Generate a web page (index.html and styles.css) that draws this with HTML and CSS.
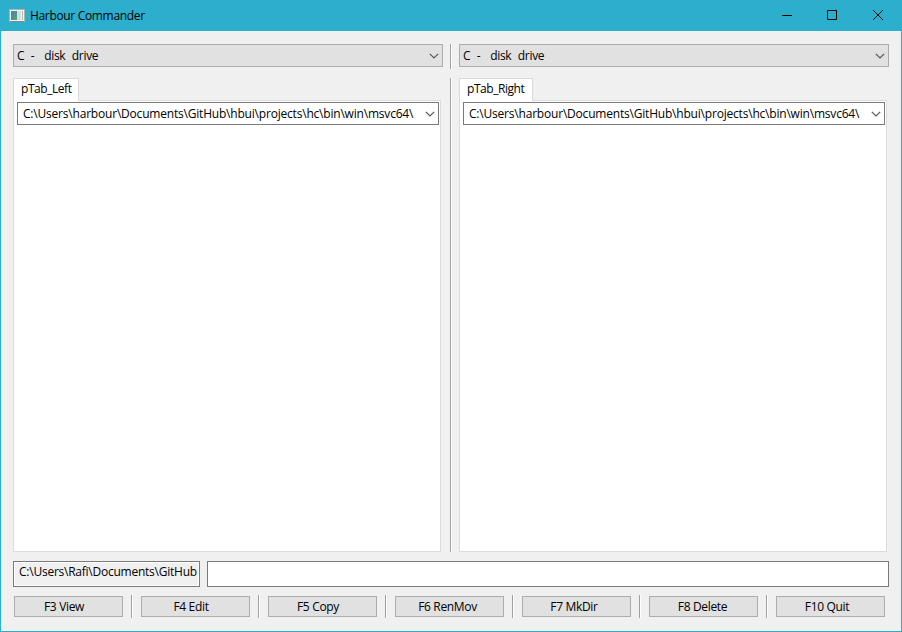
FILE: index.html
```html
<!DOCTYPE html>
<html lang="en">
<head>
<meta charset="utf-8">
<title>Harbour Commander</title>
<link rel="stylesheet" href="styles.css">
</head>
<body>
<div class="window">
  <header class="titlebar">
    <svg class="app-icon" width="16" height="14" viewBox="0 0 16 14">
      <defs><linearGradient id="g" x1="0" y1="0" x2="1" y2="1"><stop offset="0" stop-color="#4a7fa8"/><stop offset="1" stop-color="#55a878"/></linearGradient></defs>
      <rect x=".5" y=".5" width="15" height="12" fill="#f4f4f4" stroke="#b8b0aa"/>
      <rect x="1" y="12" width="14" height="1" fill="#8d8580"/>
      <rect x="2" y="2" width="6" height="9" fill="url(#g)"/>
      <rect x="8" y="2" width="4" height="9" fill="#d5dce0"/>
      <rect x="13" y="2" width="1" height="9" fill="#9fc0b8"/>
    </svg>
    <h1 class="title">Harbour Commander</h1>
    <div class="controls">
      <svg width="46" height="30" viewBox="0 0 46 30"><path d="M19 14.500h10"/></svg>
      <svg width="46" height="30" viewBox="0 0 46 30"><path d="M18.500 9.500h9v9h-9z"/></svg>
      <svg width="46" height="30" viewBox="0 0 46 30"><path d="M18 9l10 10m0-10l-10 10"/></svg>
    </div>
  </header>
  <main class="content">
    <div class="drives">
      <div class="combo drive"><span class="t-drive">C  -   disk  drive</span><svg class="chevron" width="10" height="6" viewBox="0 0 10 6"><path d="M.8 .8l4.200 4.200 4.200-4.200"/></svg></div>
      <i class="divider"></i>
      <div class="combo drive"><span class="t-drive">C  -   disk  drive</span><svg class="chevron" width="10" height="6" viewBox="0 0 10 6"><path d="M.8 .8l4.200 4.200 4.200-4.200"/></svg></div>
    </div>
    <div class="panels">
      <section class="panel">
        <div class="tab tab-left"><span class="t-tab">pTab_Left</span></div>
        <div class="pane">
          <div class="combo path"><span class="t-path">C:\Users\harbour\Documents\GitHub\hbui\projects\hc\bin\win\msvc64\</span><svg class="chevron" width="10" height="6" viewBox="0 0 10 6"><path d="M.8 .8l4.200 4.200 4.200-4.200"/></svg></div>
        </div>
      </section>
      <i class="divider"></i>
      <section class="panel">
        <div class="tab tab-right"><span class="t-tab">pTab_Right</span></div>
        <div class="pane">
          <div class="combo path"><span class="t-path">C:\Users\harbour\Documents\GitHub\hbui\projects\hc\bin\win\msvc64\</span><svg class="chevron" width="10" height="6" viewBox="0 0 10 6"><path d="M.8 .8l4.200 4.200 4.200-4.200"/></svg></div>
        </div>
      </section>
    </div>
    <div class="command">
      <div class="cwd"><span class="t-cwd">C:\Users\Rafi\Documents\GitHub</span></div>
      <input class="entry" type="text" aria-label="Command">
    </div>
    <footer class="keys">
      <button class="key">F3 View</button><i class="divider"></i>
      <button class="key">F4 Edit</button><i class="divider"></i>
      <button class="key">F5 Copy</button><i class="divider"></i>
      <button class="key renmov">F6 RenMov</button><i class="divider"></i>
      <button class="key mkdir">F7 MkDir</button><i class="divider"></i>
      <button class="key delete">F8 Delete</button><i class="divider"></i>
      <button class="key quit">F10 Quit</button>
    </footer>
  </main>
</div>
</body>
</html>
```
FILE: styles.css
```css
* { box-sizing: border-box; }
body {
  margin: 0;
  font: 12px/16px "Open Sans", "Noto Sans", sans-serif;
  color: #000;
}
.window {
  width: 902px;
  height: 632px;
  display: flex;
  flex-direction: column;
  background: #f0f0f0;
  border: 1px solid #2bafcc;
}
.titlebar {
  height: 30px;
  flex: none;
  display: flex;
  align-items: center;
  padding-left: 8px;
  background: #2bafcc;
}
.app-icon { margin-top: -1px; }
.title {
  margin: 0 0 0 5px;
  font-size: 12px;
  font-weight: 400;
  letter-spacing: -0.33px;
}
.controls { display: flex; margin-left: auto; }
.controls path { fill: none; stroke: #000; }
.content {
  flex: 1;
  display: flex;
  flex-direction: column;
  padding: 13px 12px 0;
}
.divider {
  flex: none;
  width: 2px;
  background: #a0a0a0;
  border-right: 1px solid #fff;
}
.drives { display: flex; height: 25px; gap: 7px; }
.combo {
  height: 23px;
  display: flex;
  align-items: center;
  justify-content: space-between;
  white-space: pre;
}
.drive {
  width: 430px;
  padding: 0 3px;
  background: #e1e1e1;
  border: 1px solid #adadad;
}
.t-drive { letter-spacing: -0.33px; word-spacing: 0.5px; }
.t-tab { letter-spacing: -0.45px; }
.t-path { letter-spacing: -0.2px; }
.t-cwd { letter-spacing: -0.24px; }
.chevron { flex: none; }
.chevron path { fill: none; stroke: #555; stroke-width: 1.200; }
.panels { display: flex; height: 474px; margin-top: 9px; }
.panels .divider { margin: 0 7px 0 9px; }
.panel { width: 428px; display: flex; flex-direction: column; }
.tab {
  position: relative;
  height: 23px;
  margin-bottom: -1px;
  padding: 2px 0 0 7px;
  background: #fff;
  border: 1px solid #d9d9d9;
  border-bottom: 0;
}
.tab-left { width: 66px; }
.tab-right { width: 74px; }
.pane {
  flex: 1;
  padding: 1px 1px 0 3px;
  background: #fff;
  border: 1px solid #dcdcdc;
}
.path {
  width: 422px;
  padding: 0 3px 0 5px;
  background: #fff;
  border: 1px solid #7a7a7a;
}
.command { display: flex; height: 26px; margin-top: 9px; gap: 7px; }
.cwd {
  width: 187px;
  padding: 2px 0 0 5px;
  border: 1px solid #7a7a7a;
  box-shadow: inset 0 0 0 1px #fff;
  white-space: nowrap;
}
.entry {
  width: 682px;
  padding: 0 4px;
  font: inherit;
  background: #fff;
  border: 1px solid #7a7a7a;
  outline: 0;
}
.keys { display: flex; height: 23px; margin-top: 8px; padding-left: 1px; gap: 8px; }
.key {
  width: 109px;
  height: 21px;
  margin-top: 1px;
  padding: 0 9px 0 0;
  font: inherit;
  line-height: 19px;
  letter-spacing: -0.33px;
  color: #000;
  background: #e1e1e1;
  border: 1px solid #adadad;
  border-radius: 0;
}
.renmov { padding-right: 4px; }
.mkdir { padding-right: 5px; }
.delete { padding-right: 2px; }
.quit { padding-right: 7px; }
```
